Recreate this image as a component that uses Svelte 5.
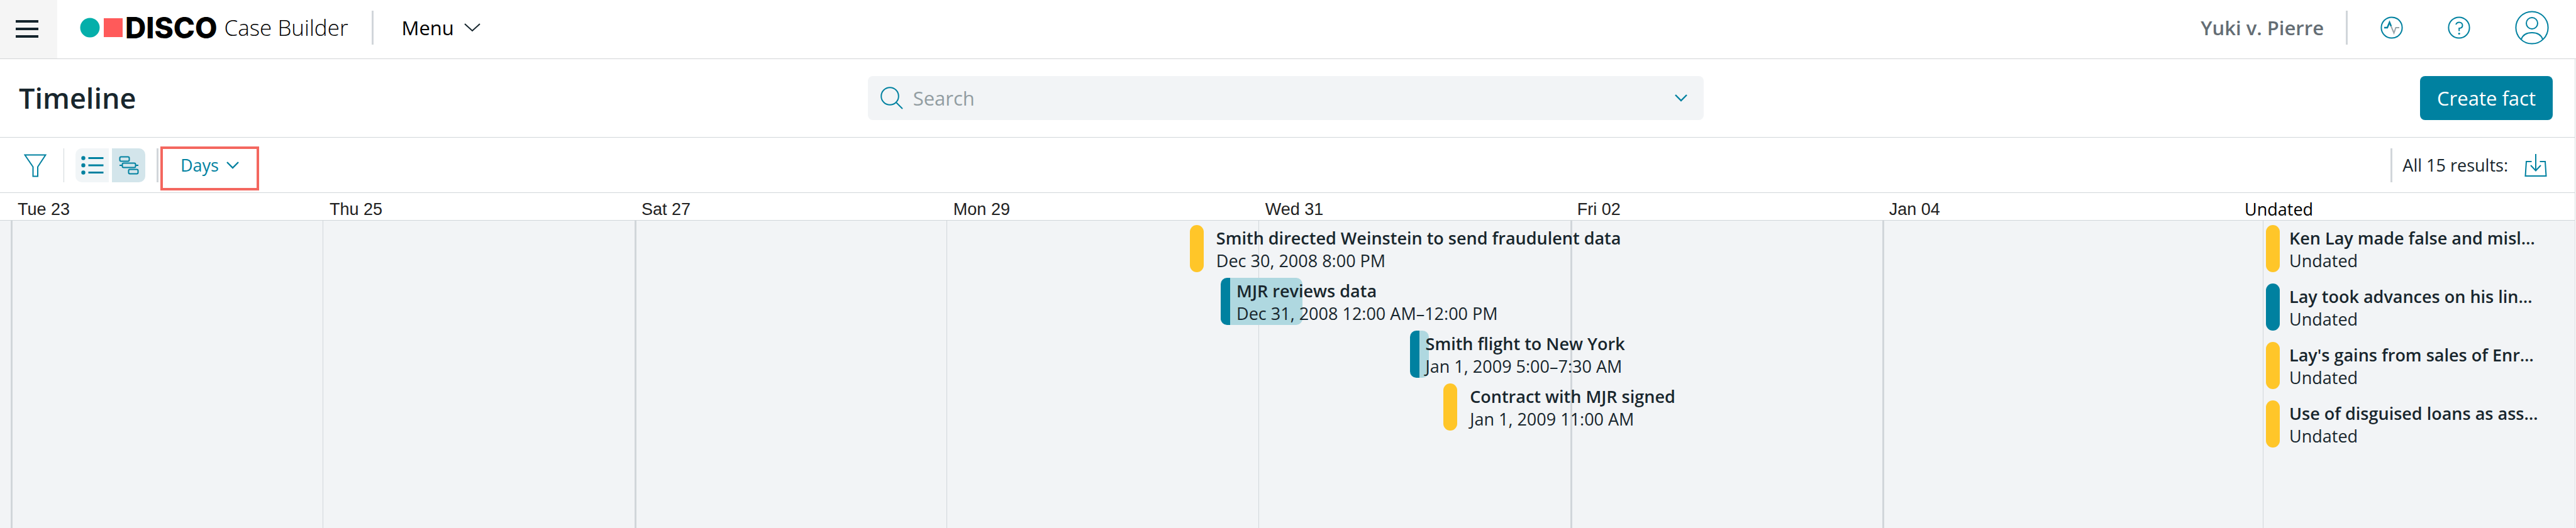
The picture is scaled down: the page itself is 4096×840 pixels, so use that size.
<script lang="ts">
  type Tick = { label: string; major: boolean };
  type Fact = { title: string; when: string; kind: 'point' | 'range'; start: number; span?: number };
  type UndatedFact = { title: string; tone: 'amber' | 'teal' };

  const ticks: Tick[] = [
    { label: 'Tue 23', major: true },
    { label: 'Thu 25', major: false },
    { label: 'Sat 27', major: true },
    { label: 'Mon 29', major: false },
    { label: 'Wed 31', major: false },
    { label: 'Fri 02', major: true },
    { label: 'Jan 04', major: true },
  ];

  // start and span are percentages of the chart width
  const facts: Fact[] = [
    { title: 'Smith directed Weinstein to send fraudulent data', when: 'Dec 30, 2008 8:00 PM', kind: 'point', start: 52.58 },
    { title: 'MJR reviews data', when: 'Dec 31, 2008 12:00 AM–12:00 PM', kind: 'range', start: 53.95, span: 3.6 },
    { title: 'Smith flight to New York', when: 'Jan 1, 2009 5:00–7:30 AM', kind: 'range', start: 62.3, span: 0.86 },
    { title: 'Contract with MJR signed', when: 'Jan 1, 2009 11:00 AM', kind: 'point', start: 63.79 },
  ];

  const undated: UndatedFact[] = [
    { title: 'Ken Lay made false and misl…', tone: 'amber' },
    { title: 'Lay took advances on his lin…', tone: 'teal' },
    { title: "Lay's gains from sales of Enr…", tone: 'amber' },
    { title: 'Use of disguised loans as ass…', tone: 'amber' },
  ];

  let view = $state('timeline');
</script>

<div class="app">
  <header class="topbar">
    <button class="hamburger" type="button" aria-label="Open navigation">
      <span></span><span></span><span></span>
    </button>
    <a class="brand" href="#home">
      <svg width="68" height="32" viewBox="0 0 68 32" aria-hidden="true">
        <circle cx="16" cy="16" r="15.5" fill="#04afaa" stroke="none" />
        <rect x="38" y="1" width="30" height="30" fill="#ff5a5a" stroke="none" />
      </svg>
      <span class="brand-name">DISCO</span>
      <span class="brand-product">Case Builder</span>
    </a>
    <span class="divider"></span>
    <button class="menu" type="button">
      Menu
      <svg width="26" height="14" viewBox="0 0 26 14" aria-hidden="true"><path d="M1 1l12 11L25 1" /></svg>
    </button>

    <div class="account">
      <span class="matter">Yuki v. Pierre</span>
      <span class="divider"></span>
      <button class="icon-btn" type="button" aria-label="Activity">
        <svg width="36" height="36" viewBox="0 0 36 36" aria-hidden="true">
          <circle cx="18" cy="18" r="16.6" />
          <path class="muted" d="M14.5 10l7 16.5 3-8.5H30" />
          <path d="M6 18h5l3.500-8.500 2.500 6" stroke-width="2.4" />
        </svg>
      </button>
      <button class="icon-btn" type="button" aria-label="Help">
        <svg width="36" height="36" viewBox="0 0 36 36" aria-hidden="true">
          <circle cx="18" cy="18" r="16.6" />
          <path d="M13 13c1-2.500 3-3.600 5.200-3.600 3 0 5.300 2 5.300 4.800 0 3.200-2.300 4.600-5.300 4.800v4.500" />
          <circle class="dot" cx="18.200" cy="27.500" r="1.6" />
        </svg>
      </button>
      <button class="icon-btn" type="button" aria-label="Profile">
        <svg width="54" height="54" viewBox="0 0 54 54" aria-hidden="true">
          <circle cx="27" cy="27" r="25.6" />
          <circle cx="27" cy="20" r="9" />
          <path d="M10 45.500c2.500-7 9-10.500 17-10.500s14.500 3.500 17 10.500" />
        </svg>
      </button>
    </div>
  </header>

  <main>
    <div class="titlebar">
      <h1>Timeline</h1>
      <div class="search">
        <svg width="36" height="36" viewBox="0 0 36 36" aria-hidden="true">
          <circle cx="15" cy="15" r="13.8" />
          <path d="M25 25l10 10" />
        </svg>
        <input type="search" placeholder="Search" aria-label="Search" />
        <button class="icon-btn" type="button" aria-label="Search options">
          <svg width="20" height="12" viewBox="0 0 20 12" aria-hidden="true"><path d="M1 1l9 9 9-9" stroke-width="2.4" /></svg>
        </button>
      </div>
      <button class="create" type="button">Create fact</button>
    </div>

    <div class="toolbar">
      <button class="icon-btn filter" type="button" aria-label="Filter">
        <svg width="36" height="38" viewBox="0 0 36 38" aria-hidden="true">
          <path d="M1.500 2.500h33L22 21.500v15h-7.500v-15z" />
        </svg>
      </button>
      <span class="divider thin"></span>
      <div class="views">
        <button class:active={view === 'list'} type="button" aria-label="List view" onclick={() => (view = 'list')}>
          <svg width="36" height="30" viewBox="0 0 36 30" aria-hidden="true">
            <g class="dot"><circle cx="3.500" cy="3.500" r="3.200" /><circle cx="3.500" cy="15" r="3.200" /><circle cx="3.500" cy="26.500" r="3.200" /></g>
            <path d="M11.500 3.500h24M11.500 15h24M11.500 26.500h24" stroke-width="2.8" />
          </svg>
        </button>
        <button class:active={view === 'timeline'} type="button" aria-label="Timeline view" onclick={() => (view = 'timeline')}>
          <svg width="32" height="30" viewBox="0 0 32 30" aria-hidden="true">
            <rect x="1.500" y="1.500" width="15" height="7" rx="2" />
            <rect x="5.500" y="11.500" width="21" height="7" rx="2" />
            <rect x="15.500" y="21.500" width="15" height="7" rx="2" />
            <path d="M1 15h4M27 15h4" />
          </svg>
        </button>
      </div>
      <span class="divider"></span>
      <button class="scale" type="button">
        Days
        <svg width="20" height="12" viewBox="0 0 20 12" aria-hidden="true"><path d="M1 1l9 9 9-9" stroke-width="2.4" /></svg>
      </button>
      <div class="results">
        <span class="divider"></span>
        <span>All 15 results:</span>
        <button class="icon-btn" type="button" aria-label="Export results">
          <svg width="36" height="38" viewBox="0 0 36 38" aria-hidden="true">
            <path d="M11.500 13H3L1.500 36h33L33 13h-8.500M18 1v26M10 19l8 8.500 8-8.500" />
          </svg>
        </button>
      </div>
    </div>

    <div class="axis">
      <div class="ticks">
        {#each ticks as tick}
          <span>{tick.label}</span>
        {/each}
      </div>
      <span class="undated-label">Undated</span>
    </div>

    <div class="board">
      <div class="chart">
        <div class="gridlines" aria-hidden="true">
          {#each ticks as tick}
            <span class:major={tick.major}></span>
          {/each}
        </div>
        {#each facts as fact}
          <div class="fact {fact.kind}" style:margin-left="{fact.start}%">
            {#if fact.kind === 'range'}
              <span class="span" style:width="{(fact.span ?? 0) * 100 / (100 - fact.start)}%"></span>
            {:else}
              <span class="pill amber"></span>
            {/if}
            <div class="text">
              <strong>{fact.title}</strong>
              <span>{fact.when}</span>
            </div>
          </div>
        {/each}
      </div>
      <aside class="undated">
        {#each undated as fact}
          <div class="fact">
            <span class="pill {fact.tone}"></span>
            <div class="text">
              <strong>{fact.title}</strong>
              <span>Undated</span>
            </div>
          </div>
        {/each}
      </aside>
    </div>
  </main>
</div>

<style>
  :global(body) {
    margin: 0;
  }

  .app {
    display: flex;
    flex-direction: column;
    min-height: 100vh;
    background: #fff;
    color: #18262d;
    font-family: 'Open Sans', 'Noto Sans', sans-serif;
    font-size: 27px;
    line-height: 36px;
  }

  .app :global(*) {
    box-sizing: border-box;
  }

  button {
    display: flex;
    align-items: center;
    padding: 0;
    border: 0;
    background: none;
    color: inherit;
    font: inherit;
    cursor: pointer;
  }

  svg {
    display: block;
    flex-shrink: 0;
    fill: none;
    stroke: #0081a0;
    stroke-width: 2;
  }

  .muted { stroke: #9aa5aa; }

  .dot {
    fill: #0081a0;
    stroke: none;
  }

  .divider {
    width: 3px;
    height: 54px;
    background: #d1d6da;
  }

  .divider.thin { width: 1px; }

  /* ── Top bar ── */
  .topbar {
    display: flex;
    align-items: center;
    height: 94px;
    padding-bottom: 5px;
    border-bottom: 1px solid #d3d5d7;
    background: linear-gradient(90deg, #f5f5f5 91px, #fff 91px);
  }

  .hamburger {
    flex-direction: column;
    gap: 8px;
    width: 91px;
    padding: 4px 5px 0 0;
  }

  .hamburger span {
    width: 36px;
    height: 4px;
    background: #14242c;
  }

  .brand {
    display: flex;
    align-items: center;
    margin: 0 37px 0 36px;
    color: #000;
    text-decoration: none;
  }

  .brand-name {
    margin: 0 11px 0 4px;
    font-family: Inter, 'Open Sans', sans-serif;
    font-size: 46px;
    font-weight: 800;
    line-height: 54px;
  }

  .brand-product {
    font-size: 35px;
    font-weight: 300;
    line-height: 54px;
  }

  .menu {
    gap: 16px;
    margin-left: 45px;
    color: #000;
    font-size: 31px;
  }

  .menu svg { stroke: #14242c; }

  .account {
    display: flex;
    align-items: center;
    margin-left: auto;
    padding-right: 43px;
  }

  .matter {
    margin-right: 35px;
    color: #646d74;
    font-size: 31px;
    font-weight: 600;
  }

  .account .divider { margin-right: 52px; }
  .account .icon-btn + .icon-btn { margin-left: 71px; }

  /* ── Title and search ── */
  main {
    display: flex;
    flex: 1;
    flex-direction: column;
    margin-right: 1px;
    border-right: 1px solid #d8dcdf;
  }

  .titlebar {
    display: grid;
    grid-template-columns: 1fr 33% 1fr;
    align-items: center;
    height: 125px;
    padding: 0 35px 0 30px;
    border-bottom: 1px solid #d1d6da;
  }

  h1 {
    margin: 0;
    font-size: 45px;
    font-weight: 600;
    line-height: 60px;
  }

  .search {
    display: flex;
    align-items: center;
    gap: 16px;
    height: 70px;
    padding: 0 26px 0 20px;
    border-radius: 8px;
    background: #f2f4f6;
  }

  .search input {
    flex: 1;
    min-width: 0;
    padding: 0;
    border: 0;
    outline: 0;
    background: none;
    color: inherit;
    font: inherit;
    font-size: 31px;
  }

  .search input::placeholder {
    color: #929da2;
    opacity: 1;
  }

  .create {
    justify-self: end;
    height: 70px;
    padding: 0 27px;
    border-radius: 8px;
    background: #0081a0;
    color: #fff;
    font-size: 31px;
  }

  /* ── Toolbar ── */
  .toolbar {
    display: flex;
    align-items: center;
    height: 88px;
    padding: 0 44px 0 38px;
    border-bottom: 1px solid #d1d6da;
  }

  .filter { margin-right: 27px; }

  .views {
    display: flex;
    gap: 5px;
    margin: 0 18px;
  }

  .views button {
    justify-content: center;
    width: 53px;
    height: 54px;
    background: #f1f5f7;
  }

  .views button:first-child { border-radius: 10px 0 0 10px; }
  .views button:last-child { border-radius: 0 10px 10px 0; }
  .views button.active { background: #d3e5eb; }

  .scale {
    position: relative;
    gap: 12px;
    height: 54px;
    margin-left: 3px;
    padding: 0 32px;
    color: #0081a0;
  }

  /* highlight frame, hangs below the button */
  .scale::after {
    position: absolute;
    inset: -3px 0 -13px;
    border: 4px solid #f4675f;
    content: '';
  }

  .results {
    display: flex;
    align-items: center;
    margin-left: auto;
  }

  .results .divider { margin-right: 16px; }
  .results .icon-btn { margin-left: 26px; }

  /* ── Axis ── */
  .axis {
    display: grid;
    grid-template-columns: 1fr 496px;
    align-items: center;
    height: 44px;
    padding-top: 8px;
    border-bottom: 1px solid #d1d6da;
  }

  .ticks,
  .gridlines {
    display: grid;
    grid-template-columns: repeat(7, 13.85%);
    padding-left: 17px;
  }

  .ticks {
    color: #222;
    font-family: 'Liberation Sans', Arial, sans-serif;
  }

  .ticks span { padding-left: 11px; }

  .undated-label {
    margin-left: -29px;
    color: #000;
  }

  /* ── Board ── */
  .board {
    display: grid;
    flex: 1;
    grid-template-columns: 1fr 496px;
    background: #f2f4f6;
  }

  .chart {
    position: relative;
    display: flex;
    flex-direction: column;
    gap: 9px;
    padding-top: 7px;
  }

  .gridlines {
    position: absolute;
    inset: 0;
  }

  .gridlines span { border-left: 1px solid #d1d6da; }
  .gridlines .major { border-left-width: 3px; }

  .fact {
    position: relative;
    display: flex;
    height: 75px;
  }

  .pill {
    flex-shrink: 0;
    width: 22px;
    height: 75px;
    margin-right: 15px;
    border-radius: 11px;
  }

  .chart .pill { margin-right: 20px; }

  .amber { background: #ffc629; }
  .teal { background: #0081a0; }

  .span {
    position: absolute;
    top: 0;
    left: 0;
    height: 75px;
    border-left: 15px solid #0081a0;
    border-radius: 10px;
    background: #afd8e0;
  }

  .range .text { padding-left: 25px; }

  .text {
    position: relative;
    display: flex;
    flex-direction: column;
    padding-top: 3px;
    white-space: nowrap;
  }

  .text strong { font-weight: 600; }

  .undated {
    display: flex;
    flex-direction: column;
    gap: 18px;
    padding: 7px 0 0 4px;
    border-left: 1px solid #d1d6da;
  }
</style>
